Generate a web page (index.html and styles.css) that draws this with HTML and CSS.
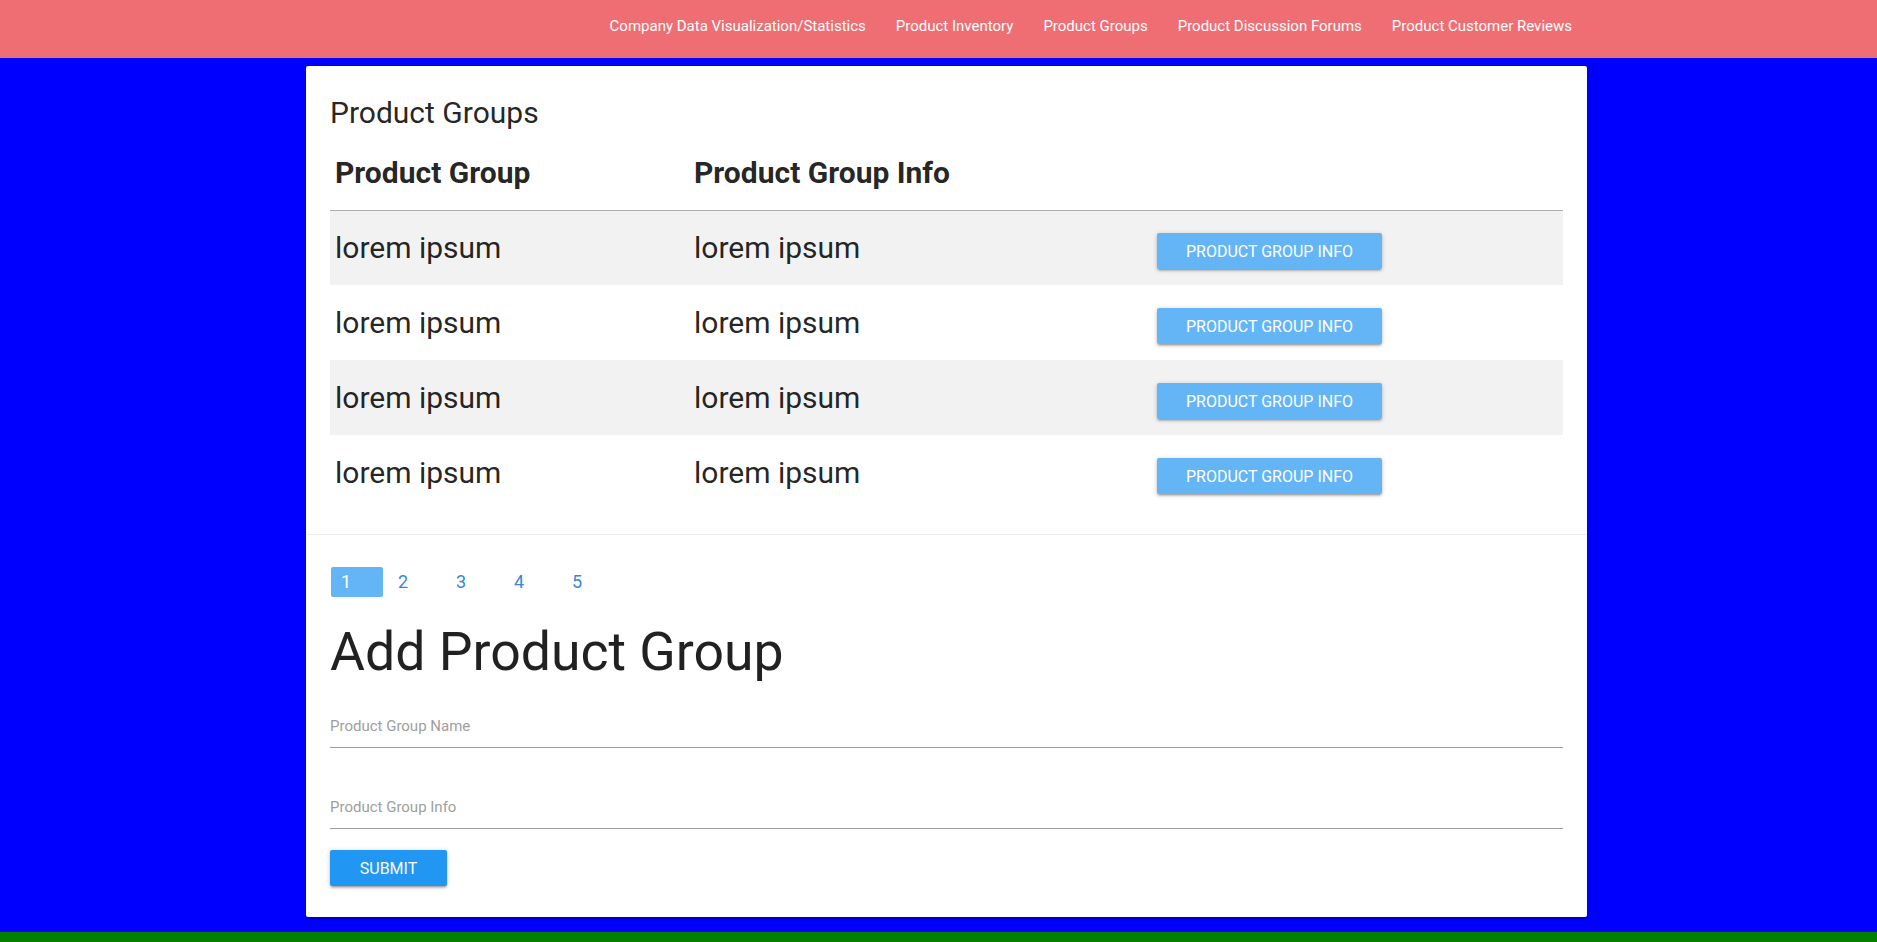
FILE: index.html
```html
<!DOCTYPE html>
<html lang="en">
<head>
<meta charset="utf-8">
<title>Product Groups</title>
<link rel="stylesheet" href="styles.css">
</head>
<body>
<header class="topbar">
  <nav class="nav-wrap">
    <ul class="nav-list">
      <li><a href="#">Company Data Visualization/Statistics</a></li>
      <li><a href="#">Product Inventory</a></li>
      <li><a href="#">Product Groups</a></li>
      <li><a href="#">Product Discussion Forums</a></li>
      <li><a href="#">Product Customer Reviews</a></li>
    </ul>
  </nav>
</header>

<main class="main">
  <section class="card">
    <div class="card-content">
      <div class="card-title">Product Groups</div>
      <table class="groups">
        <colgroup>
          <col class="c1"><col class="c2"><col class="c3">
        </colgroup>
        <thead>
          <tr><th>Product Group</th><th>Product Group Info</th><th></th></tr>
        </thead>
        <tbody>
          <tr><td>lorem ipsum</td><td>lorem ipsum</td><td><button class="btn btn-light">Product Group Info</button></td></tr>
          <tr><td>lorem ipsum</td><td>lorem ipsum</td><td><button class="btn btn-light">Product Group Info</button></td></tr>
          <tr><td>lorem ipsum</td><td>lorem ipsum</td><td><button class="btn btn-light">Product Group Info</button></td></tr>
          <tr><td>lorem ipsum</td><td>lorem ipsum</td><td><button class="btn btn-light">Product Group Info</button></td></tr>
        </tbody>
      </table>
    </div>
    <div class="card-action">
      <ul class="pagination">
        <li class="active"><a href="#">1</a></li>
        <li><a href="#">2</a></li>
        <li><a href="#">3</a></li>
        <li><a href="#">4</a></li>
        <li><a href="#">5</a></li>
      </ul>
      <h2 class="add-title">Add Product Group</h2>
      <form class="add-form">
        <div class="field"><input type="text" placeholder="Product Group Name"></div>
        <div class="field field-2"><input type="text" placeholder="Product Group Info"></div>
        <button type="button" class="btn btn-primary">Submit</button>
      </form>
    </div>
  </section>
</main>

<footer class="footer"></footer>
</body>
</html>
```

FILE: styles.css
```css
* { box-sizing: border-box; }

html, body {
  margin: 0;
  padding: 0;
}

body {
  background: #0000ff;
  font-family: Roboto, "Liberation Sans", Arial, sans-serif;
  color: rgba(0, 0, 0, 0.87);
  height: 942px;
  display: flex;
  flex-direction: column;
}

/* ---------- top navigation ---------- */
.topbar {
  background: #ee6e73;
  height: 58px;
  flex: none;
}

.nav-wrap {
  width: 1281px;
  margin-left: 306px;
  height: 100%;
}

.nav-list {
  list-style: none;
  margin: 0;
  padding: 0;
  height: 100%;
  display: flex;
  justify-content: flex-end;
  align-items: flex-start;
}

.nav-list a {
  display: block;
  padding: 0 15px;
  color: #fff;
  text-decoration: none;
  font-size: 15px;
  line-height: 52px;
}

/* ---------- card ---------- */
.main {
  flex: 1;
  padding-top: 8px;
}

.card {
  width: 1281px;
  height: 851px;
  margin-left: 306px;
  background: #fff;
  border-radius: 2px;
  box-shadow: 0 2px 2px 0 rgba(0,0,0,.14), 0 3px 1px -2px rgba(0,0,0,.12), 0 1px 5px 0 rgba(0,0,0,.2);
}

.card-content {
  padding: 24px 24px 24px;
}

.card-title {
  font-size: 30px;
  line-height: 46px;
  font-weight: 400;
}

.groups {
  width: 100%;
  border-collapse: collapse;
  table-layout: fixed;
}

.groups .c1 { width: 359px; }
.groups .c2 { width: 463px; }

.groups thead tr {
  border-bottom: 1px solid rgba(0, 0, 0, 0.15);
}

.groups th {
  height: 74px;
  padding: 0 5px;
  text-align: left;
  font-size: 30px;
  font-weight: 700;
  vertical-align: middle;
}

.groups td {
  height: 75px;
  padding: 0 5px;
  font-size: 30px;
  vertical-align: middle;
}

.groups tbody tr:nth-child(odd) {
  background: #f2f2f2;
}

/* ---------- buttons ---------- */
.btn {
  border: none;
  border-radius: 2px;
  height: 36px;
  padding: 0;
  font-family: inherit;
  font-size: 16px;
  text-transform: uppercase;
  color: #fff;
  cursor: pointer;
  box-shadow: 0 2px 2px 0 rgba(0,0,0,.14), 0 3px 1px -2px rgba(0,0,0,.12), 0 1px 5px 0 rgba(0,0,0,.2);
}

.btn-light {
  display: block;
  margin-top: 7px;
  background: #64b5f6;
  width: 225px;
}

.btn-primary {
  background: #2196f3;
  width: 117px;
  margin-top: 21px;
}

/* ---------- card action ---------- */
.card-action {
  border-top: 1px solid rgba(160, 160, 160, 0.2);
  padding: 32px 24px 31px 25px;
}

.pagination {
  list-style: none;
  margin: 0;
  padding: 0;
  display: flex;
  gap: 6px;
}

.pagination li {
  width: 52px;
  height: 30px;
  border-radius: 2px;
}

.pagination a {
  display: block;
  padding-left: 9px;
  line-height: 30px;
  font-size: 18px;
  color: #3b86d8;
  text-decoration: none;
}

.pagination li.active {
  background: #64b5f6;
}

.pagination li.active a {
  color: #fff;
  padding-left: 10px;
}

.add-title {
  margin: 25px 0 0 -1px;
  font-size: 53.6px;
  line-height: 60px;
  font-weight: 400;
}

.add-form {
  display: flex;
  flex-direction: column;
  align-items: flex-start;
  margin-left: -1px;
}

.field {
  width: 100%;
  margin-top: 20px;
}

.field-2 {
  margin-top: 35px;
}

.field input {
  display: block;
  width: 100%;
  height: 46px;
  border: none;
  border-bottom: 1px solid #9e9e9e;
  outline: none;
  padding: 2px 0 0;
  font-family: inherit;
  font-size: 15px;
  background: transparent;
}

.field input::placeholder {
  color: #9e9e9e;
}

/* ---------- footer ---------- */
.footer {
  flex: none;
  height: 10px;
  background: #008000;
}
```
